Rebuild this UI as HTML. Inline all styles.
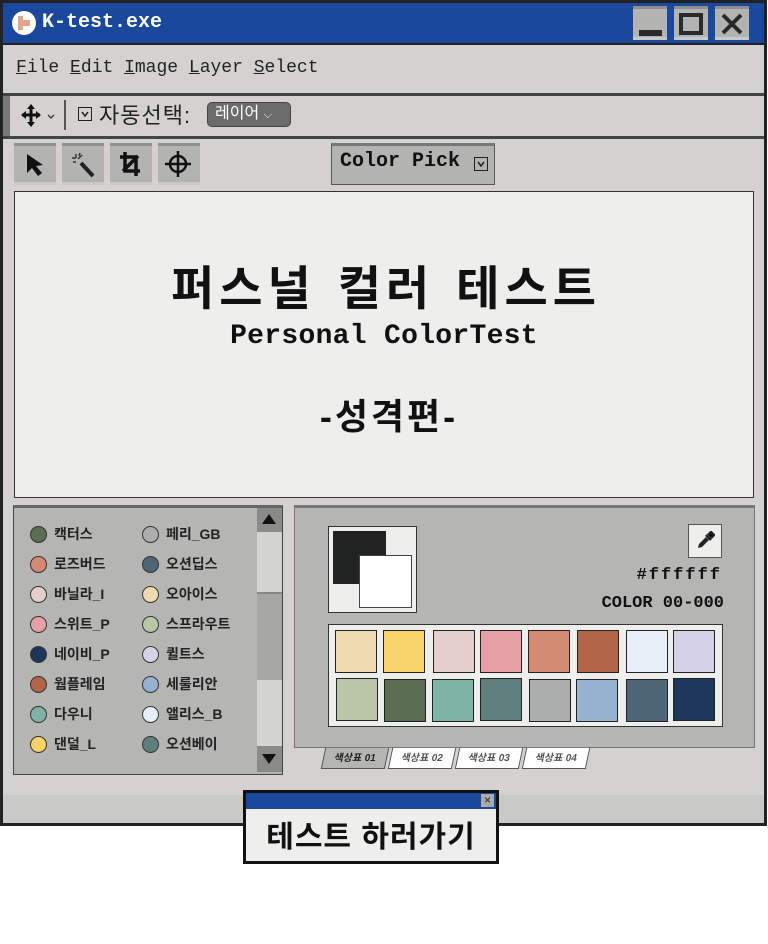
<!DOCTYPE html>
<html><head><meta charset="utf-8"><style>
*{margin:0;padding:0;box-sizing:border-box}
body{width:768px;height:944px;background:#fff;position:relative;overflow:hidden;font-family:"Liberation Mono","Noto Sans CJK KR",monospace;color:#111}
.a{position:absolute}
.k{font-family:"Liberation Sans","Noto Sans CJK KR",sans-serif}
.btn{position:absolute;background:#b3b3b1;border-top:3px solid #8f8f8d;border-bottom:3px solid #c8c8c6}
.dot{position:absolute;width:17px;height:17px;border-radius:50%;border:1.5px solid #333}
.lbl{position:absolute;font-size:14px;font-weight:bold;font-family:"Liberation Sans","Noto Sans CJK KR",sans-serif;color:#222;line-height:17px}
.sw{position:absolute;width:42px;height:43px;border:1.5px solid #222}
.tab{position:absolute;top:748px;height:21px;font-size:10px;font-weight:bold;line-height:21px;text-align:center;font-family:"Liberation Sans","Noto Sans CJK KR",sans-serif;border:1px solid #555;border-top:none;background:#fff;color:#555;transform:skewX(-12deg)}
</style></head><body>
<div class="a" style="left:0;top:0;width:767px;height:826px;background:#d3d2d0;border:3px solid #222"></div>
<div class="a" style="left:3px;top:3px;width:761px;height:40px;background:#19489c"></div>
<div class="a" style="left:12px;top:11px;width:24px;height:24px;border-radius:50%;background:#fff"></div>
<div class="a" style="left:18px;top:16px;width:5px;height:14px;background:#e4a48c"></div>
<div class="a" style="left:23px;top:20px;width:7px;height:6px;background:#e4a48c"></div>
<div class="a" style="left:42px;top:11px;font-size:20px;color:#fff;font-weight:bold">K-test.exe</div>
<div class="btn" style="left:633px;top:6px;width:34px;height:34px"><div class="a" style="left:6px;top:21px;width:23px;height:6px;background:#2a2a2a"></div></div>
<div class="btn" style="left:674px;top:6px;width:34px;height:34px"><div class="a" style="left:5px;top:4px;width:24px;height:22px;border:4px solid #2a2a2a"></div></div>
<div class="btn" style="left:715px;top:6px;width:34px;height:34px"><svg class="a" style="left:6px;top:4px" width="22" height="22"><path d="M2 2L20 20M20 2L2 20" stroke="#2a2a2a" stroke-width="4"/></svg></div>
<div class="a" style="left:3px;top:43px;width:761px;height:2px;background:#222"></div>
<div class="a" style="left:16px;top:58px;font-size:18px;color:#222"><u>F</u>ile <u>E</u>dit <u>I</u>mage <u>L</u>ayer <u>S</u>elect</div>
<div class="a" style="left:3px;top:93px;width:761px;height:3px;background:#444"></div>
<div class="a" style="left:3px;top:96px;width:7px;height:40px;background:#777"></div>
<svg class="a" style="left:21px;top:104px" width="36" height="24"><path d="M10 2L10 21M1 11L19 11" stroke="#111" stroke-width="3"/><path d="M10 0L6 5H14ZM10 23L6 18H14ZM0 11L5 7V15ZM20 11L15 7V15Z" fill="#111"/><path d="M27 11L30 14L33 11" stroke="#333" fill="none" stroke-width="1.3"/></svg>
<div class="a" style="left:64px;top:100px;width:2px;height:30px;background:#555"></div>
<div class="a" style="left:78px;top:107px;width:14px;height:14px;border:1.5px solid #222"></div>
<svg class="a" style="left:80px;top:109px" width="10" height="10"><path d="M2 3L5 7L8 3" stroke="#222" stroke-width="1.5" fill="none"/></svg>
<div class="a k" style="left:99px;top:98px;font-size:22px;color:#222;letter-spacing:1px">자동선택:</div>
<div class="a k" style="left:207px;top:102px;width:84px;height:25px;background:#6c6c6c;border:1px solid #444;border-radius:5px;color:#fff;font-size:16px;padding-left:7px;line-height:22px">레이어 <span style="font-size:11px">⌵</span></div>
<div class="a" style="left:3px;top:136px;width:761px;height:3px;background:#444"></div>
<div class="btn" style="left:14px;top:143px;width:42px;height:42px"><svg width="42" height="36"><path d="M13 8L13 27L18 22L24 30L28 27L22 20L29 19Z" fill="#111"/></svg></div>
<div class="btn" style="left:62px;top:143px;width:42px;height:42px"><svg width="42" height="36"><path d="M19 17L31 30" stroke="#222" stroke-width="4"/><path d="M14 8V12M10 12H14M18 7L17 10M11 16L14 16M16 13L20 9" stroke="#333" stroke-width="1.5"/></svg></div>
<div class="btn" style="left:110px;top:143px;width:42px;height:42px"><svg width="42" height="36"><path d="M15 6V25H30M10 11H26V30M13 25L28 10" stroke="#111" stroke-width="3.5" fill="none"/></svg></div>
<div class="btn" style="left:158px;top:143px;width:42px;height:42px"><svg width="42" height="36"><circle cx="20" cy="18" r="8" stroke="#111" stroke-width="2.5" fill="none"/><path d="M20 5V31M7 18H33" stroke="#111" stroke-width="2.5"/></svg></div>
<div class="a" style="left:331px;top:143px;width:164px;height:42px;background:#b3b3b1;border:1px solid #555;border-top:3px solid #777"></div>
<div class="a" style="left:340px;top:150px;font-size:20px;font-weight:bold;color:#111">Color Pick</div>
<div class="a" style="left:474px;top:157px;width:14px;height:14px;border:1.5px solid #222"></div>
<svg class="a" style="left:476px;top:159px" width="10" height="10"><path d="M2 3L5 7L8 3" stroke="#222" stroke-width="1.5" fill="none"/></svg>
<div class="a" style="left:14px;top:191px;width:740px;height:307px;background:#eeeeec;border:1px solid #333"></div>
<div class="a k" style="left:0;top:250px;width:768px;text-align:center;font-size:47px;font-weight:bold;color:#111;letter-spacing:5px;word-spacing:4px;padding-left:4px">퍼스널 컬러 테스트</div>
<div class="a" style="left:0;top:321px;width:768px;text-align:center;font-size:28px;font-weight:bold;color:#111;padding-left:0px;letter-spacing:0.3px">Personal ColorTest</div>
<div class="a k" style="left:0;top:388px;width:768px;text-align:center;font-size:36px;font-weight:bold;color:#111;padding-left:10px;letter-spacing:3px">-성격편-</div>
<div class="a" style="left:13px;top:505px;width:270px;height:270px;background:#b5b5b3;border:1px solid #444;border-top:3px solid #666"></div>
<div class="a" style="left:257px;top:508px;width:25px;height:24px;background:#8a8a88"></div>
<svg class="a" style="left:261px;top:512px" width="16" height="14"><path d="M8 2L15 12H1Z" fill="#111"/></svg>
<div class="a" style="left:257px;top:532px;width:25px;height:60px;background:#d3d3d1"></div>
<div class="a" style="left:257px;top:592px;width:25px;height:88px;background:#a6a6a4;border-top:2px solid #888"></div>
<div class="a" style="left:257px;top:680px;width:25px;height:66px;background:#d3d3d1"></div>
<div class="a" style="left:257px;top:746px;width:25px;height:26px;background:#8a8a88"></div>
<svg class="a" style="left:261px;top:752px" width="16" height="14"><path d="M8 12L15 2H1Z" fill="#111"/></svg>
<div class="dot" style="left:30px;top:526px;background:#5b6e52"></div><div class="lbl" style="left:54px;top:526px">캑터스</div>
<div class="dot" style="left:30px;top:556px;background:#d38b74"></div><div class="lbl" style="left:54px;top:556px">로즈버드</div>
<div class="dot" style="left:30px;top:586px;background:#e5cfcd"></div><div class="lbl" style="left:54px;top:586px">바닐라_I</div>
<div class="dot" style="left:30px;top:616px;background:#e6a0a5"></div><div class="lbl" style="left:54px;top:616px">스위트_P</div>
<div class="dot" style="left:30px;top:646px;background:#1f365b"></div><div class="lbl" style="left:54px;top:646px">네이비_P</div>
<div class="dot" style="left:30px;top:676px;background:#b06448"></div><div class="lbl" style="left:54px;top:676px">웜플레임</div>
<div class="dot" style="left:30px;top:706px;background:#7fb3a5"></div><div class="lbl" style="left:54px;top:706px">다우니</div>
<div class="dot" style="left:30px;top:736px;background:#f7d369"></div><div class="lbl" style="left:54px;top:736px">댄덜_L</div>
<div class="dot" style="left:142px;top:526px;background:#abaeac"></div><div class="lbl" style="left:166px;top:526px">페리_GB</div>
<div class="dot" style="left:142px;top:556px;background:#4e6576"></div><div class="lbl" style="left:166px;top:556px">오션딥스</div>
<div class="dot" style="left:142px;top:586px;background:#efd9b0"></div><div class="lbl" style="left:166px;top:586px">오아이스</div>
<div class="dot" style="left:142px;top:616px;background:#bac6a5"></div><div class="lbl" style="left:166px;top:616px">스프라우트</div>
<div class="dot" style="left:142px;top:646px;background:#d6d3e8"></div><div class="lbl" style="left:166px;top:646px">퀼트스</div>
<div class="dot" style="left:142px;top:676px;background:#97b2ce"></div><div class="lbl" style="left:166px;top:676px">세룰리안</div>
<div class="dot" style="left:142px;top:706px;background:#e8eef7"></div><div class="lbl" style="left:166px;top:706px">앨리스_B</div>
<div class="dot" style="left:142px;top:736px;background:#607f7c"></div><div class="lbl" style="left:166px;top:736px">오션베이</div>
<div class="a" style="left:294px;top:505px;width:461px;height:243px;background:#b5b5b3;border:1px solid #777;border-top:3px solid #777"></div>
<div class="a" style="left:328px;top:526px;width:89px;height:87px;background:#eeeeec;border:1.5px solid #333"></div>
<div class="a" style="left:333px;top:531px;width:53px;height:53px;background:#212322"></div>
<div class="a" style="left:359px;top:555px;width:53px;height:53px;background:#fff;border:1.5px solid #444"></div>
<div class="a" style="left:688px;top:524px;width:34px;height:34px;background:#eeeeec;border:1.5px solid #555"></div>
<svg class="a" style="left:695px;top:531px" width="20" height="20"><path d="M3 17L4 13L11 6L14 9L7 16Z" fill="#222"/><path d="M11 4L16 9M13 4L16 1L19 4L16 7" stroke="#222" stroke-width="2.5"/></svg>
<div class="a" style="left:600px;top:566px;width:122px;text-align:right;font-size:17px;font-weight:bold;letter-spacing:2px">#ffffff</div>
<div class="a" style="left:560px;top:594px;width:164px;text-align:right;font-size:17px;font-weight:bold">COLOR 00-000</div>
<div class="a" style="left:328px;top:624px;width:395px;height:103px;background:#eeeeec;border:1.5px solid #333"></div>
<div class="sw" style="left:335px;top:630px;background:#efd9b0"></div>
<div class="sw" style="left:383px;top:630px;background:#f7d369"></div>
<div class="sw" style="left:433px;top:630px;background:#e5cfcd"></div>
<div class="sw" style="left:480px;top:630px;background:#e6a0a5"></div>
<div class="sw" style="left:528px;top:630px;background:#d38b74"></div>
<div class="sw" style="left:577px;top:630px;background:#b06448"></div>
<div class="sw" style="left:626px;top:630px;background:#e8eef7"></div>
<div class="sw" style="left:673px;top:630px;background:#d6d3e8"></div>
<div class="sw" style="left:336px;top:678px;background:#bac6a5"></div>
<div class="sw" style="left:384px;top:679px;background:#5b6e52"></div>
<div class="sw" style="left:432px;top:679px;background:#7fb3a5"></div>
<div class="sw" style="left:480px;top:678px;background:#607f7c"></div>
<div class="sw" style="left:529px;top:679px;background:#abaeac"></div>
<div class="sw" style="left:576px;top:679px;background:#97b2ce"></div>
<div class="sw" style="left:626px;top:679px;background:#4e6576"></div>
<div class="sw" style="left:673px;top:678px;background:#1f365b"></div>
<div class="tab" style="left:323px;width:64px;background:#b5b5b3;color:#222">색상표 01</div>
<div class="tab" style="left:390px;width:64px">색상표 02</div>
<div class="tab" style="left:457px;width:64px">색상표 03</div>
<div class="tab" style="left:524px;width:64px">색상표 04</div>
<div class="a" style="left:3px;top:795px;width:761px;height:28px;background:#c9c9c7"></div>
<div class="a" style="left:243px;top:790px;width:256px;height:74px;background:#eeeeec;border:3px solid #111"></div>
<div class="a" style="left:246px;top:793px;width:250px;height:16px;background:#19489c"></div>
<div class="a" style="left:481px;top:794px;width:13px;height:13px;background:#aaa;font-size:12px;line-height:12px;text-align:center;color:#222;font-family:'Liberation Sans',sans-serif">×</div>
<div class="a k" style="left:243px;top:812px;width:256px;text-align:center;font-size:30px;font-weight:bold;color:#111;letter-spacing:1px">테스트 하러가기</div>
</body></html>
